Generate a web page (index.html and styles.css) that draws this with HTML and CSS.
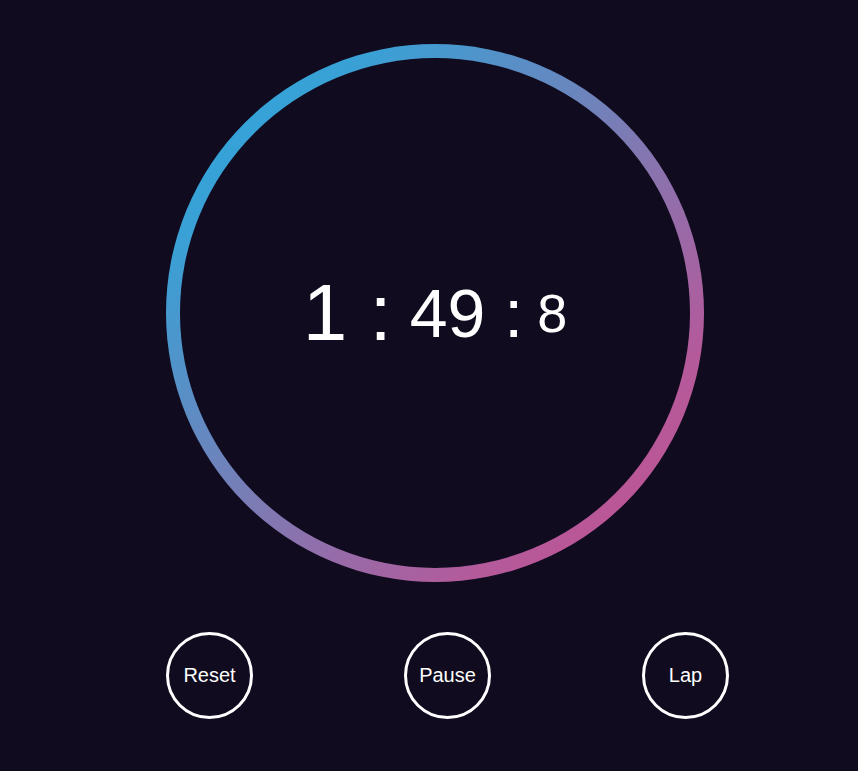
FILE: index.html
```html
<!DOCTYPE html>
<html lang="en">
<head>
<meta charset="utf-8">
<title>Stopwatch</title>
<link rel="stylesheet" href="styles.css">
</head>
<body>
<div class="app">
  <div class="ring">
    <div class="face">
      <div class="time">
        <span class="hours">1 :</span>
        <span class="minutes">49 :</span>
        <span class="seconds">8</span>
      </div>
    </div>
  </div>
  <div class="controls">
    <button class="btn">Reset</button>
    <button class="btn">Pause</button>
    <button class="btn">Lap</button>
  </div>
</div>
</body>
</html>
```
FILE: styles.css
```css
html, body {
  margin: 0;
  padding: 0;
  background: #100b1e;
  height: 100%;
}
body {
  font-family: "Liberation Sans", Arial, sans-serif;
  color: #ffffff;
}
.app {
  padding: 44px 0 0 166px;
}
.ring {
  width: 538px;
  height: 538px;
  box-sizing: border-box;
  padding: 14px;
  border-radius: 50%;
  background: linear-gradient(135deg, #28a9de 0%, #3aa0d5 20%, #7a7cb5 50%, #b45a9b 78%, #c74f8c 100%);
}
.face {
  width: 100%;
  height: 100%;
  border-radius: 50%;
  background: #100b1e;
  display: flex;
  align-items: center;
  justify-content: center;
}
.time {
  display: flex;
  align-items: center;
  white-space: pre;
  color: #ffffff;
}
.hours {
  font-size: 80px;
}
.minutes {
  font-size: 68px;
  margin-left: 18px;
}
.seconds {
  font-size: 54px;
  margin-left: 14px;
}
.controls {
  display: flex;
  gap: 151px;
  margin-top: 50px;
}
.btn {
  width: 87px;
  height: 87px;
  box-sizing: border-box;
  border-radius: 50%;
  border: 3px solid #ffffff;
  background: transparent;
  color: #ffffff;
  font-family: "Liberation Sans", Arial, sans-serif;
  font-size: 20px;
  padding: 0;
  display: flex;
  align-items: center;
  justify-content: center;
}
```
